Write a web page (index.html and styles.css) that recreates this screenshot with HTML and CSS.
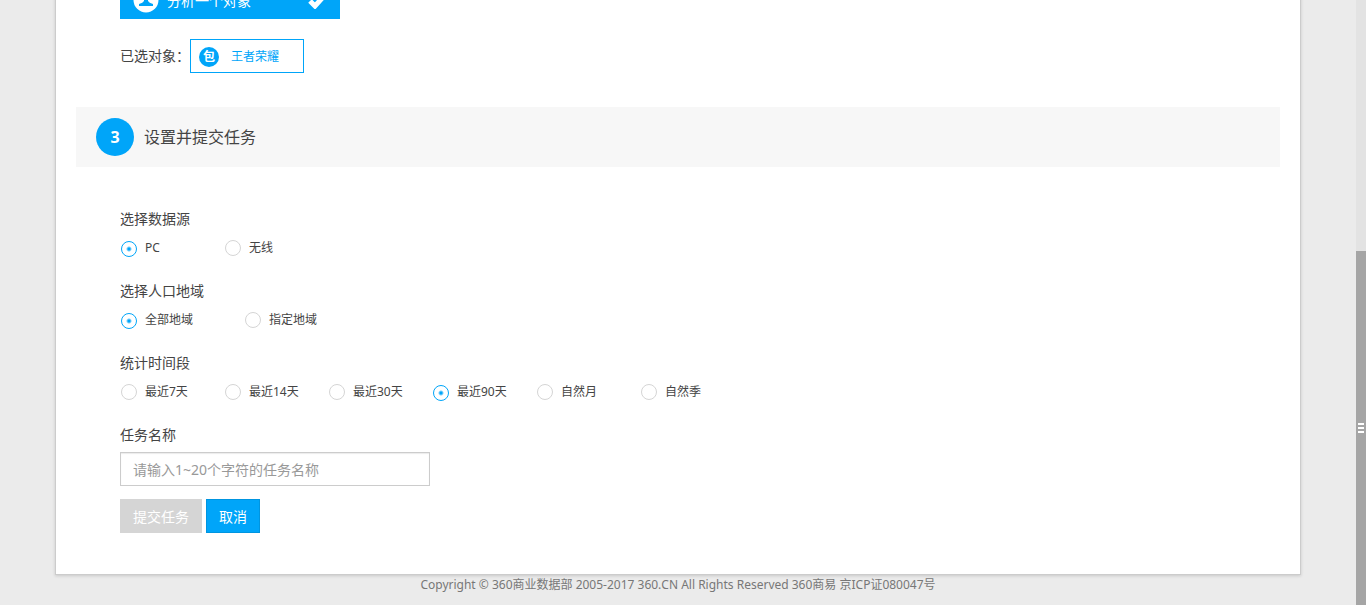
FILE: index.html
```html
<!DOCTYPE html>
<html lang="zh-CN">
<head>
    <meta charset="UTF-8">
    <meta name="viewport" content="width=device-width, initial-scale=1.0">
    <title>设置并提交任务</title>
    <link rel="stylesheet" href="styles.css">
</head>
<body>

    <div class="page">
        <div class="main">
            <div class="panel">

                <!-- step 2: chosen object -->
                <div class="section">
                    <button type="button" class="type-card">
                        <svg width="26" height="26" viewBox="0 0 26 26">
                            <circle cx="13" cy="13" r="12.5" fill="#fff"/>
                            <circle cx="13" cy="8" r="4" fill="#00a5f9"/>
                            <path d="M11 10h4v4q1 2 5 3v2H6v-2q4-1 5-3z" fill="#00a5f9"/>
                        </svg>
                        <span class="type-name">分析一个对象</span>
                        <svg width="18" height="18" viewBox="0 0 18 18">
                            <path d="M2 10l5 5 9-10" fill="none" stroke="#fff" stroke-width="5"/>
                        </svg>
                    </button>
                    <div class="selected">
                        <span class="selected-label">已选对象：</span>
                        <span class="tag"><span class="tag-icon">包</span>王者荣耀</span>
                    </div>
                </div>

                <!-- step 3 -->
                <div class="step">
                    <span class="step-num">3</span>
                    <h2>设置并提交任务</h2>
                </div>

                <form class="section">
                    <fieldset>
                        <legend>选择数据源</legend>
                        <div class="options">
                            <label><input type="radio" name="source" checked>PC</label>
                            <label><input type="radio" name="source">无线</label>
                        </div>
                    </fieldset>
                    <fieldset>
                        <legend>选择人口地域</legend>
                        <div class="options options-wide">
                            <label><input type="radio" name="region" checked>全部地域</label>
                            <label><input type="radio" name="region">指定地域</label>
                        </div>
                    </fieldset>
                    <fieldset>
                        <legend>统计时间段</legend>
                        <div class="options">
                            <label><input type="radio" name="period">最近7天</label>
                            <label><input type="radio" name="period">最近14天</label>
                            <label><input type="radio" name="period">最近30天</label>
                            <label><input type="radio" name="period" checked>最近90天</label>
                            <label><input type="radio" name="period">自然月</label>
                            <label><input type="radio" name="period">自然季</label>
                        </div>
                    </fieldset>
                    <label class="name-label" for="taskName">任务名称</label>
                    <input type="text" id="taskName" class="name-input" placeholder="请输入1~20个字符的任务名称">
                    <div class="buttons">
                        <button type="submit" class="btn" disabled>提交任务</button>
                        <button type="button" class="btn">取消</button>
                    </div>
                </form>
            </div>

            <footer>Copyright © 360商业数据部 2005-2017 360.CN All Rights Reserved 360商易 京ICP证080047号</footer>
        </div>

        <!-- scroll track -->
        <div class="track">
            <div class="thumb"><i></i><i></i><i></i></div>
        </div>
    </div>

</body>
</html>
```

FILE: styles.css
```css
* {
    box-sizing: border-box;
}
body {
    margin: 0;
    overflow: hidden;
    background-color: #ebebeb;
    color: #444;
    font-family: "Noto Sans", "Noto Sans CJK SC", sans-serif;
    font-size: 14px;
    line-height: 20px;
}
button, input {
    font: inherit;
}
.page {
    display: flex;
    height: 100vh;
    overflow: hidden;
}
.main {
    flex: 1;
}
.panel {
    margin: 0 55px;
    padding: 0 20px 41px;
    background-color: #fff;
    border: 1px solid #ccc;
    border-top: none;
    box-shadow: 0 1px 3px rgba(0, 0, 0, 0.15);
}
.section {
    padding: 0 44px;
}

/* chosen object */
.type-card {
    display: flex;
    align-items: center;
    width: 220px;
    height: 38px;
    margin-top: -19px;
    padding: 0 14px 0 13px;
    background-color: #00a5f9;
    border: none;
    color: #fff;
    cursor: pointer;
}
.type-name {
    flex: 1;
    padding: 2px 0 0 8px;
    text-align: left;
}
.selected {
    display: flex;
    align-items: center;
    margin: 20px 0 34px;
}
.selected-label {
    width: 70px;
}
.tag {
    display: flex;
    align-items: center;
    height: 34px;
    padding: 2px 24px 0 8px;
    border: 1px solid #00a5f9;
    color: #00a5f9;
    font-size: 12px;
}
.tag-icon {
    width: 20px;
    height: 20px;
    margin-right: 12px;
    border-radius: 50%;
    background-color: #00a5f9;
    color: #fff;
    font-weight: bold;
    text-align: center;
}

/* step header */
.step {
    display: flex;
    align-items: center;
    height: 60px;
    margin-bottom: 42px;
    padding-left: 20px;
    background-color: #f7f7f7;
}
.step-num {
    width: 38px;
    margin-right: 10px;
    border-radius: 50%;
    background-color: #00a5f9;
    color: #fff;
    font-size: 16px;
    font-weight: bold;
    line-height: 38px;
    text-align: center;
}
.step h2 {
    margin: 0;
    font-size: 16px;
    font-weight: normal;
}

/* form */
fieldset {
    margin: 0 0 23px;
    padding: 0;
    border: none;
}
legend {
    padding: 0;
}
.options {
    display: flex;
    padding-top: 9px;
    font-size: 12px;
}
.options label {
    display: flex;
    align-items: center;
    width: 104px;
}
.options-wide label {
    width: 124px;
}
.options input {
    appearance: none;
    width: 16px;
    height: 16px;
    margin: 0 8px 0 1px;
    border: 1px solid #d5d5d5;
    border-radius: 50%;
    background-color: #fff;
}
.options input:checked {
    margin-top: 2px;
    border-color: #00a5f9;
    background: radial-gradient(circle, #00a5f9 1px, #fff 3px);
}
.name-label {
    display: block;
    margin-bottom: 7px;
}
.name-input {
    display: block;
    width: 310px;
    height: 34px;
    padding: 0 12px;
    border: 1px solid #ccc;
    box-shadow: inset 0 1px 1px rgba(0, 0, 0, 0.08);
    color: #444;
}
.name-input::placeholder {
    color: #999;
}
.buttons {
    display: flex;
    gap: 4px;
    margin-top: 13px;
}
.btn {
    height: 34px;
    padding: 2px 12px 0;
    border: 1px solid #0095e0;
    background-color: #00a5f9;
    color: #fff;
    cursor: pointer;
}
.btn:disabled {
    border-color: #d5d5d5;
    background-color: #d5d5d5;
    cursor: default;
}

footer {
    color: #777;
    font-size: 12px;
    text-align: center;
}

/* scroll track */
.track {
    display: flex;
    flex-direction: column;
    justify-content: flex-end;
    width: 10px;
    background-color: #e3e3e3;
}
.thumb {
    display: flex;
    flex-direction: column;
    align-items: center;
    justify-content: center;
    gap: 2px;
    height: 354px;
    background-color: #a5a5a5;
}
.thumb i {
    width: 6px;
    height: 2px;
    background-color: #fff;
}
```
